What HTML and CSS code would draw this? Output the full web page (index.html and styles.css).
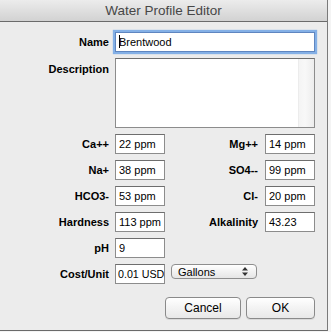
FILE: index.html
```html
<!DOCTYPE html>
<html lang="en">
<head>
  <meta charset="UTF-8" />
  <title>Water Profile Editor</title>
  <link rel="stylesheet" href="styles.css">
</head>
<body>
  <div class="window">
    <div class="titlebar">Water Profile Editor</div>

    <div class="form">
      <label class="lbl">Name</label>
      <div class="field wide focus"><span class="caret"></span>Brentwood</div>

      <label class="lbl top">Description</label>
      <div class="area wide"><div class="scroll"></div></div>

      <label class="lbl">Ca++</label>
      <div class="field">22 ppm</div>
      <label class="lbl right">Mg++</label>
      <div class="field">14 ppm</div>

      <label class="lbl">Na+</label>
      <div class="field">38 ppm</div>
      <label class="lbl right">SO4--</label>
      <div class="field">99 ppm</div>

      <label class="lbl">HCO3-</label>
      <div class="field">53 ppm</div>
      <label class="lbl right">Cl-</label>
      <div class="field">20 ppm</div>

      <label class="lbl">Hardness</label>
      <div class="field">113 ppm</div>
      <label class="lbl right">Alkalinity</label>
      <div class="field">43.23</div>

      <label class="lbl">pH</label>
      <div class="field">9</div>

      <label class="lbl">Cost/Unit</label>
      <div class="field tight">0.01 USD</div>
      <div class="popup">
        Gallons
        <svg width="6" height="9" viewBox="0 0 6 9"><path d="M3 0L6 3.5H0z M3 9L6 5.5H0z" fill="#333"/></svg>
      </div>
    </div>

    <div class="buttons">
      <button class="cancel">Cancel</button>
      <button class="ok">OK</button>
    </div>
  </div>
</body>
</html>
```

FILE: styles.css
```css
body {
  margin: 0;
  background-color: #f4f4f4;
  font-family: "Liberation Sans", Arial, sans-serif;
  font-size: 11px;
  color: #000;
}

.window {
  width: 328px;
  height: 331px;
  box-sizing: border-box;
  background-color: #ececec;
  border-right: 1px solid #7a7a7a;
  border-bottom: 1px solid #6a6a6a;
}

.titlebar {
  height: 21px;
  line-height: 21px;
  border-bottom: 1px solid #6b6b6b;
  background: linear-gradient(#ececec, #d2d2d2);
  text-align: center;
  font-size: 13.5px;
  color: #474747;
}

.form {
  display: grid;
  grid-template-columns: 115px 50px 100px 50px;
  grid-template-rows: 20px 70px repeat(6, 20px);
  row-gap: 6px;
  padding-top: 10px;
}

.lbl {
  grid-column: 1;
  align-self: center;
  text-align: right;
  padding-right: 6px;
  font-weight: bold;
}

.lbl.right {
  grid-column: 3;
  padding-right: 7px;
}

.lbl.top {
  align-self: start;
  padding-top: 5px;
}

.field {
  box-sizing: border-box;
  height: 20px;
  line-height: 18px;
  padding: 0 3px;
  background-color: #fff;
  border: 1px solid #8c8c8c;
  border-top-color: #6e6e6e;
  white-space: nowrap;
  overflow: hidden;
}

.field.tight {
  padding: 0 0 0 2px;
  font-size: 10.7px;
}

.wide {
  grid-column: 2 / span 3;
}

.focus {
  border-color: #5f86c0;
  box-shadow: 0 0 1px 2px #84b0e6;
}

.caret {
  display: inline-block;
  width: 1px;
  height: 13px;
  margin-right: -1px;
  vertical-align: -2px;
  background-color: #000;
}

.area {
  display: flex;
  justify-content: flex-end;
  box-sizing: border-box;
  background-color: #fff;
  border: 1px solid #8c8c8c;
  border-top-color: #6e6e6e;
}

.scroll {
  width: 15px;
  background: linear-gradient(to right, #f4f4f4, #f8f8f8 40%, #ededed);
  border-left: 1px solid #ececec;
}

.popup {
  grid-column: 3;
  justify-self: start;
  align-self: start;
  display: flex;
  justify-content: space-between;
  align-items: center;
  box-sizing: border-box;
  width: 86px;
  height: 15px;
  margin-left: 6px;
  padding: 0 8px 0 6px;
  border: 1px solid #8e8e8e;
  border-radius: 4px;
  background: linear-gradient(#ffffff, #f2f2f2 50%, #e6e6e6);
}

.buttons {
  display: flex;
  justify-content: flex-end;
  gap: 5px;
  margin-top: 13px;
  padding-right: 12px;
}

button {
  height: 22px;
  padding: 0;
  border: 1px solid #8a8a8a;
  border-radius: 4px;
  background: linear-gradient(#ffffff, #f3f3f3 50%, #e8e8e8);
  box-shadow: 0 1px 0 rgba(0, 0, 0, 0.08);
  font-family: "Liberation Sans", Arial, sans-serif;
  font-size: 12px;
  color: #000;
}

.cancel {
  width: 76px;
}

.ok {
  width: 69px;
}
```
